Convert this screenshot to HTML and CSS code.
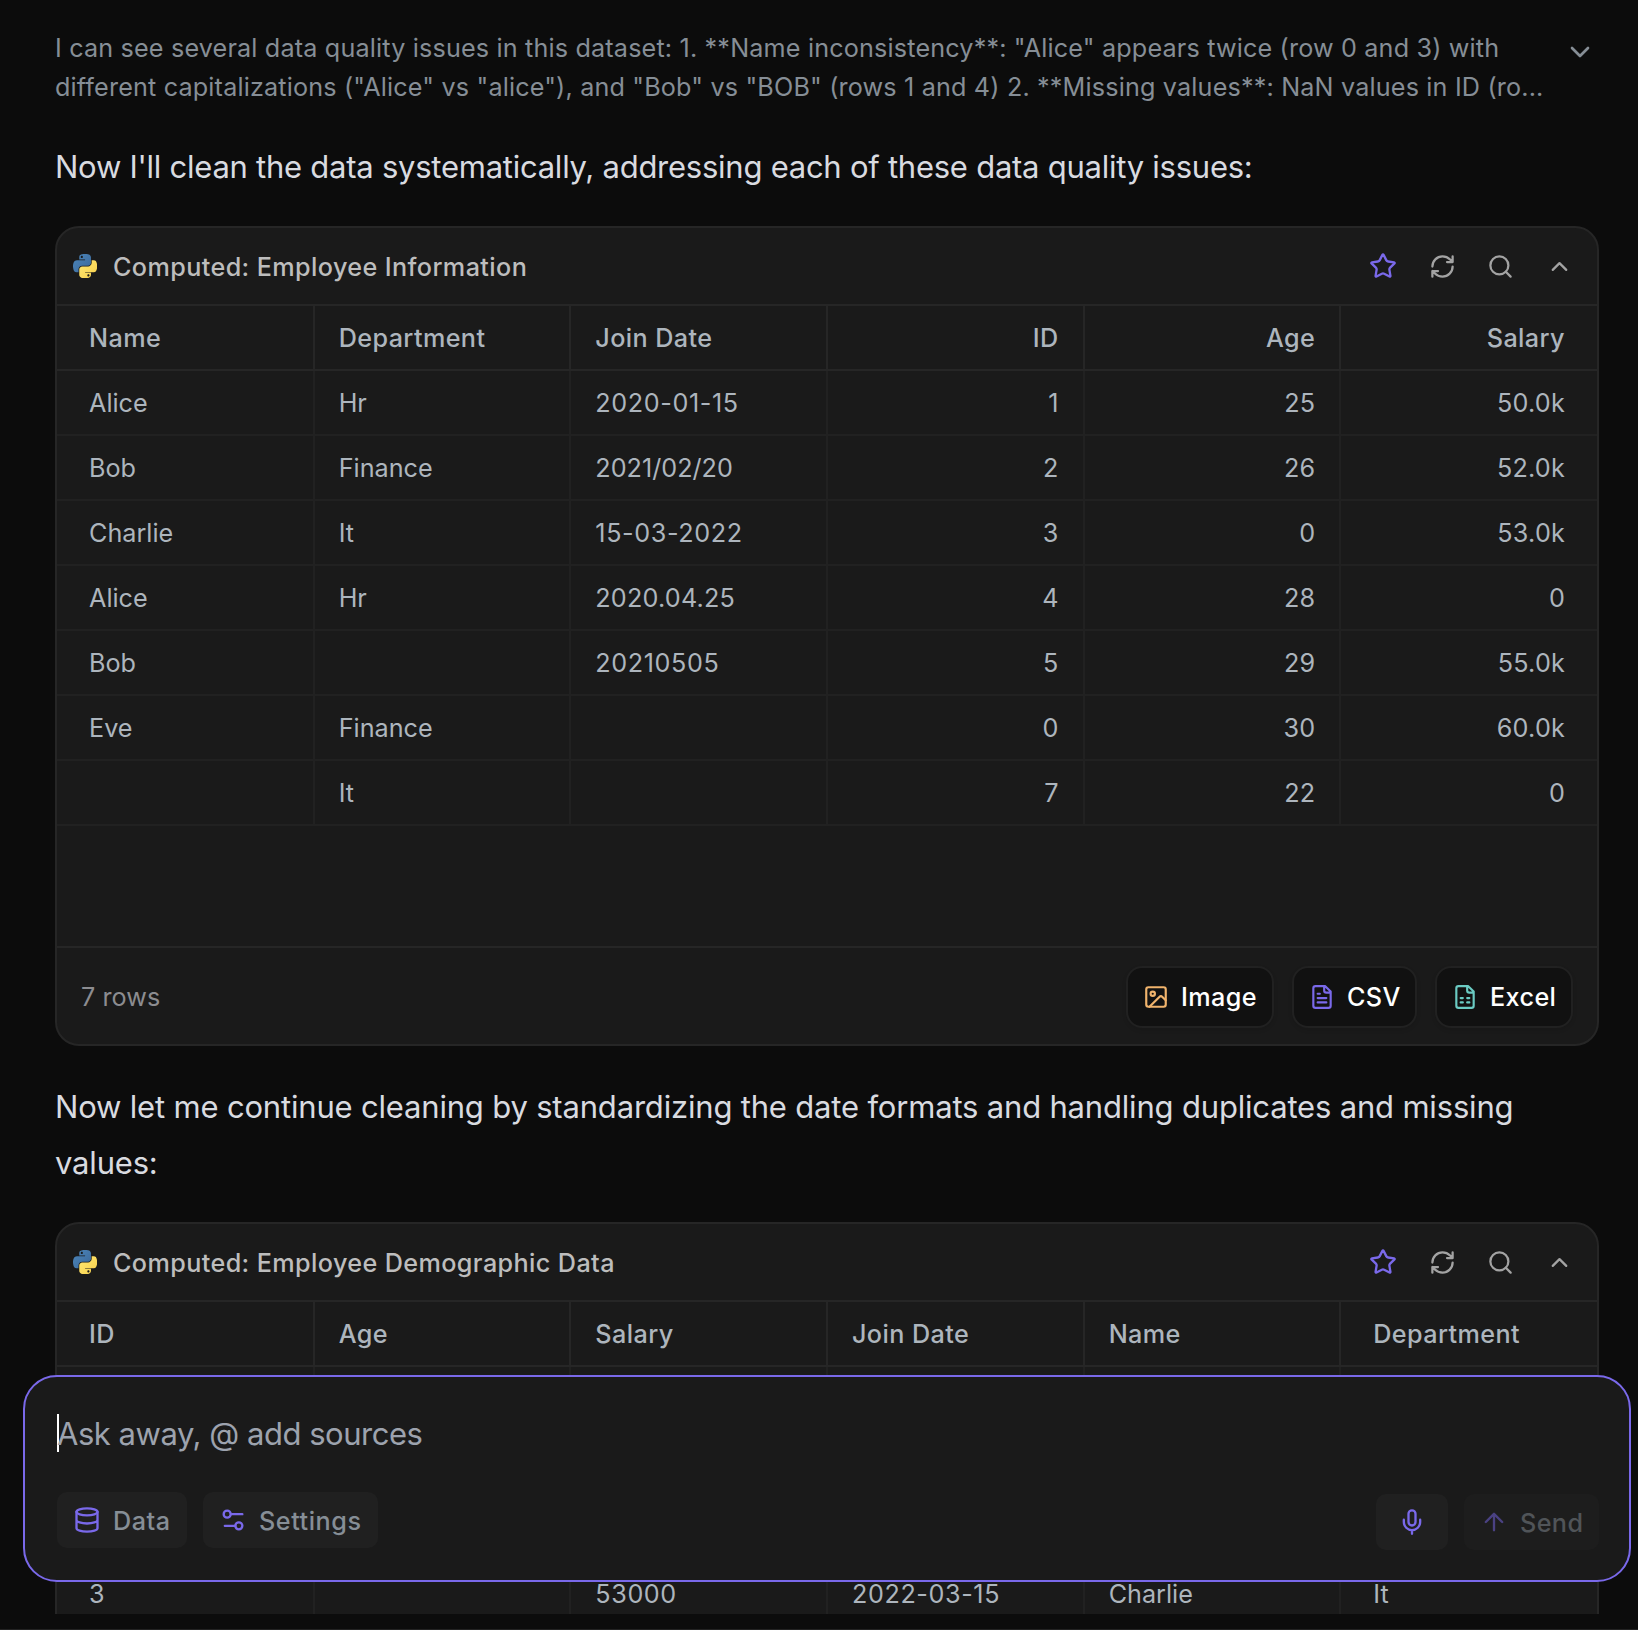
FILE: index.html
```html
<!DOCTYPE html>
<html lang="en">
<head>
<meta charset="utf-8">
<title>Data chat</title>
<link rel="stylesheet" href="styles.css">
</head>
<body>
<svg class="sprite" width="0" height="0" aria-hidden="true">
  <defs>
    <linearGradient id="py-blue" x1="0" y1="0" x2="1" y2="1"><stop offset="0" stop-color="#4b86bb"/><stop offset="1" stop-color="#3b6798"/></linearGradient>
    <linearGradient id="py-yellow" x1="0" y1="0" x2="1" y2="1"><stop offset="0" stop-color="#ffe873"/><stop offset="1" stop-color="#f8d04a"/></linearGradient>
    <symbol id="i-python" viewBox="0 0 110 110">
      <path fill="url(#py-blue)" d="M54.9 0c-4.600.02-9 .41-12.800 1.100-11.400 2-13.400 6.200-13.400 14v10.200h26.800v3.400H18.600c-7.800 0-14.600 4.700-16.800 13.600-2.500 10.200-2.600 16.600 0 27.300 1.900 7.900 6.500 13.600 14.300 13.600h9.200V70.900c0-8.900 7.700-16.700 16.800-16.700h26.800c7.500 0 13.400-6.100 13.400-13.600V15.100c0-7.300-6.100-12.700-13.400-14C64.300.3 59.500 0 54.900 0zM40.400 8.200c2.800 0 5 2.300 5 5.100s-2.200 5.100-5 5.100-5-2.300-5-5.100 2.200-5.100 5-5.100z"/>
      <path fill="url(#py-yellow)" d="M85.600 28.700v11.900c0 9.200-7.800 17-16.800 17H42.100c-7.300 0-13.400 6.300-13.400 13.600v25.500c0 7.300 6.300 11.500 13.400 13.600 8.500 2.500 16.600 2.900 26.800 0 6.700-2 13.400-5.900 13.400-13.600V86.500H55.500v-3.400h40.200c7.800 0 10.700-5.400 13.400-13.600 2.800-8.400 2.700-16.500 0-27.300-1.900-7.800-5.600-13.600-13.400-13.600zM70.600 93.300c2.800 0 5 2.300 5 5.100s-2.200 5.100-5 5.100-5-2.300-5-5.100 2.200-5.100 5-5.100z"/>
    </symbol>
    <symbol id="i-star" viewBox="0 0 24 24"><path d="M11.525 2.295a.53.53 0 0 1 .95 0l2.310 4.679a2.123 2.123 0 0 0 1.595 1.160l5.166.756a.53.53 0 0 1 .294.904l-3.736 3.638a2.123 2.123 0 0 0-.611 1.878l.882 5.140a.53.53 0 0 1-.771.560l-4.618-2.428a2.122 2.122 0 0 0-1.973 0L6.396 21.010a.53.53 0 0 1-.770-.560l.881-5.139a2.122 2.122 0 0 0-.611-1.879L2.160 9.795a.53.53 0 0 1 .294-.906l5.165-.755a2.122 2.122 0 0 0 1.597-1.160z"/></symbol>
    <symbol id="i-refresh" viewBox="0 0 24 24"><path d="M3 12a9 9 0 0 1 9-9 9.750 9.750 0 0 1 6.740 2.740L21 8M21 3v5h-5M21 12a9 9 0 0 1-9 9 9.750 9.750 0 0 1-6.740-2.740L3 16M8 16H3v5"/></symbol>
    <symbol id="i-search" viewBox="0 0 24 24"><circle cx="11" cy="11" r="8"/><path d="m21 21-4.300-4.300"/></symbol>
    <symbol id="i-up" viewBox="0 0 24 24"><path d="m18 15-6-6-6 6"/></symbol>
    <symbol id="i-down" viewBox="0 0 24 24"><path d="m6 9 6 6 6-6"/></symbol>
    <symbol id="i-image" viewBox="0 0 24 24"><rect x="3" y="3" width="18" height="18" rx="2"/><circle cx="9" cy="9" r="2"/><path d="m21 15-3.086-3.086a2 2 0 0 0-2.828 0L6 21"/></symbol>
    <symbol id="i-doc" viewBox="0 0 24 24"><path d="M15 2H6a2 2 0 0 0-2 2v16a2 2 0 0 0 2 2h12a2 2 0 0 0 2-2V7zM14 2v4a2 2 0 0 0 2 2h4M10 9H8M16 13H8M16 17H8"/></symbol>
    <symbol id="i-sheet" viewBox="0 0 24 24"><path d="M15 2H6a2 2 0 0 0-2 2v16a2 2 0 0 0 2 2h12a2 2 0 0 0 2-2V7zM14 2v4a2 2 0 0 0 2 2h4M8 13h2M14 13h2M8 17h2M14 17h2"/></symbol>
    <symbol id="i-data" viewBox="0 0 24 24"><ellipse cx="12" cy="5" rx="9" ry="3"/><path d="M3 5v14a9 3 0 0 0 18 0V5M3 12a9 3 0 0 0 18 0"/></symbol>
    <symbol id="i-settings" viewBox="0 0 24 24"><path d="M20 7h-9M14 17H5"/><circle cx="17" cy="17" r="3"/><circle cx="7" cy="7" r="3"/></symbol>
    <symbol id="i-mic" viewBox="0 0 24 24"><path d="M12 2a3 3 0 0 0-3 3v7a3 3 0 0 0 6 0V5a3 3 0 0 0-3-3zM19 10v2a7 7 0 0 1-14 0v-2M12 19v3"/></symbol>
    <symbol id="i-arrow" viewBox="0 0 24 24"><path d="m5 12 7-7 7 7M12 19V5"/></symbol>
  </defs>
</svg>
<div class="app">
  <main class="thread">
    <div class="thought">
      <p class="thought-text">I can see several data quality issues in this dataset: 1. **Name inconsistency**: "Alice" appears twice (row 0 and 3) with<br>different capitalizations ("Alice" vs "alice"), and "Bob" vs "BOB" (rows 1 and 4) 2. **Missing values**: NaN values in ID (ro...</p>
      <svg class="icon thought-toggle"><use href="#i-down"/></svg>
    </div>
    <p class="message">Now I'll clean the data systematically, addressing each of these data quality issues:</p>
    <section class="card">
      <header class="card-head">
        <svg class="python"><use href="#i-python"/></svg>
        <h2 class="card-title">Computed: Employee Information</h2>
        <div class="actions">
          <svg class="icon star"><use href="#i-star"/></svg>
          <svg class="icon"><use href="#i-refresh"/></svg>
          <svg class="icon"><use href="#i-search"/></svg>
          <svg class="icon"><use href="#i-up"/></svg>
        </div>
      </header>
      <div class="table-area">
        <table class="grid">
          <thead><tr><th>Name</th><th>Department</th><th>Join Date</th><th class="num">ID</th><th class="num">Age</th><th class="num">Salary</th></tr></thead>
          <tbody>
            <tr><td>Alice</td><td>Hr</td><td class="date">2020-01-15</td><td class="num">1</td><td class="num">25</td><td class="num">50.0k</td></tr>
            <tr><td>Bob</td><td>Finance</td><td>2021/02/20</td><td class="num">2</td><td class="num">26</td><td class="num">52.0k</td></tr>
            <tr><td>Charlie</td><td>It</td><td class="date">15-03-2022</td><td class="num">3</td><td class="num">0</td><td class="num">53.0k</td></tr>
            <tr><td>Alice</td><td>Hr</td><td class="dotted">2020.04.25</td><td class="num">4</td><td class="num">28</td><td class="num">0</td></tr>
            <tr><td>Bob</td><td></td><td class="date">20210505</td><td class="num">5</td><td class="num">29</td><td class="num">55.0k</td></tr>
            <tr><td>Eve</td><td>Finance</td><td></td><td class="num">0</td><td class="num">30</td><td class="num">60.0k</td></tr>
            <tr><td></td><td>It</td><td></td><td class="num">7</td><td class="num">22</td><td class="num">0</td></tr>
          </tbody>
        </table>
      </div>
      <footer class="card-foot">
        <span class="count">7 rows</span>
        <button class="export image"><svg class="icon"><use href="#i-image"/></svg><span>Image</span></button>
        <button class="export csv"><svg class="icon"><use href="#i-doc"/></svg><span>CSV</span></button>
        <button class="export excel"><svg class="icon"><use href="#i-sheet"/></svg><span>Excel</span></button>
      </footer>
    </section>
    <p class="message wide">Now let me continue cleaning by standardizing the date formats and handling duplicates and missing values:</p>
    <section class="card">
      <header class="card-head">
        <svg class="python"><use href="#i-python"/></svg>
        <h2 class="card-title">Computed: Employee Demographic Data</h2>
        <div class="actions">
          <svg class="icon star"><use href="#i-star"/></svg>
          <svg class="icon"><use href="#i-refresh"/></svg>
          <svg class="icon"><use href="#i-search"/></svg>
          <svg class="icon"><use href="#i-up"/></svg>
        </div>
      </header>
      <div class="table-area">
        <table class="grid">
          <thead><tr><th>ID</th><th>Age</th><th>Salary</th><th>Join Date</th><th>Name</th><th>Department</th></tr></thead>
          <tbody>
            <tr><td></td><td></td><td></td><td></td><td></td><td></td></tr>
            <tr><td></td><td></td><td></td><td></td><td></td><td></td></tr>
            <tr><td></td><td></td><td></td><td></td><td></td><td></td></tr>
            <tr><td>3</td><td></td><td class="date">53000</td><td class="date">2022-03-15</td><td>Charlie</td><td>It</td></tr>
          </tbody>
        </table>
      </div>
    </section>
  </main>
  <div class="composer">
    <div class="prompt"><span class="caret"></span>Ask away, @ add sources</div>
    <div class="tools">
      <button class="tool data"><svg class="icon"><use href="#i-data"/></svg><span>Data</span></button>
      <button class="tool settings"><svg class="icon"><use href="#i-settings"/></svg><span>Settings</span></button>
      <div class="send-group">
        <button class="tool mic"><svg class="icon"><use href="#i-mic"/></svg></button>
        <button class="tool send"><svg class="icon"><use href="#i-arrow"/></svg><span>Send</span></button>
      </div>
    </div>
  </div>
</div>
</body>
</html>
```
FILE: styles.css
```css
* { box-sizing: border-box; }
body {
  margin: 0;
  background: #0c0c0c;
  font-family: Inter, "Liberation Sans", sans-serif;
  font-size: 25.2px;
  letter-spacing: 0.16px;
}
.sprite { position: absolute; }
.app {
  position: relative;
  width: 1638px;
  height: 1630px;
  overflow: hidden;
  border-bottom: 1px solid #232323;
}
.thread {
  height: 1614px;
  overflow: hidden;
  padding: 29px 39px 0 55px;
}
.thought { display: flex; height: 78px; }
.thought-text {
  flex: 1;
  min-width: 0;
  margin: 0;
  line-height: 39px;
  color: #868e96;
  white-space: nowrap;
}
.icon {
  flex: none;
  width: 28px;
  height: 28px;
  fill: none;
  stroke: currentColor;
  stroke-width: 2;
  stroke-linecap: round;
  stroke-linejoin: round;
}
.thought-toggle { width: 32px; height: 32px; margin: 7px 3px 0 0; color: #868e96; }
.message {
  margin: 32px 0 31px;
  font-size: 31px;
  line-height: 56px;
  letter-spacing: -0.25px;
  color: #d9dbe0;
}
.wide { margin-top: 33px; letter-spacing: -0.18px; }
.card {
  height: 820px;
  display: flex;
  flex-direction: column;
  overflow: hidden;
  border: 2px solid #262626;
  border-radius: 24px;
  background: #1a1a1a;
}
.card-head {
  flex: none;
  display: flex;
  align-items: center;
  height: 78px;
  padding: 0 24px 0 16px;
  border-bottom: 2px solid #262626;
}
.python { width: 24px; height: 24px; }
.card-title {
  margin: 0 0 0 16px;
  padding-top: 2px;
  font-size: 25.2px;
  font-weight: 500;
  letter-spacing: 0.39px;
  color: #bdbdbd;
}
.actions { display: flex; align-items: center; gap: 31.7px; margin-left: auto; color: #a3a3a3; }
.actions .icon { width: 27px; height: 27px; }
.actions .star { width: 28px; height: 28px; margin: 0 0.3px 0 0; }
.star { color: #7a69ea; }
.table-area { flex: 1; min-height: 0; }
.grid {
  width: 100%;
  table-layout: fixed;
  border-collapse: collapse;
  color: #adb5bd;
  letter-spacing: 0;
}
.grid th, .grid td {
  height: 65px;
  padding: 0 24px;
  text-align: left;
  font-weight: 400;
  border-right: 2px solid #212121;
  border-bottom: 2px solid #212121;
}
.grid th { height: 64px; font-weight: 500; border-color: #262626; letter-spacing: 0.4px; }
.grid .num { text-align: right; }
.grid td.num { letter-spacing: 0.2px; }
.grid .date { letter-spacing: 0.6px; }
.grid .dotted { letter-spacing: 0.2px; }
.grid th:first-child, .grid td:first-child { padding-left: 32px; }
.grid th:last-child, .grid td:last-child { padding-right: 32px; border-right: 0; }
.grid th:last-child:not(.num), .grid td:last-child:not(.num) { padding-left: 32px; }
.card-foot {
  flex: none;
  display: flex;
  align-items: center;
  gap: 18px;
  height: 98px;
  padding: 1px 24px 0;
  border-top: 2px solid #262626;
}
.count { flex: 1; padding-top: 1px; color: #8c8c90; letter-spacing: 0.05px; }
button { font: inherit; }
.export {
  display: flex;
  align-items: center;
  gap: 12px;
  height: 62px;
  padding: 0 0 0 15px;
  border: 2px solid #212121;
  border-radius: 16px;
  background: #111;
  color: #fff;
  font-weight: 500;
  letter-spacing: 0.4px;
  box-shadow: 0 2px 4px rgba(0, 0, 0, 0.1);
}
.export span { padding-top: 1px; }
.export .icon { width: 26px; height: 26px; }
.image { width: 148px; }
.csv { width: 125px; }
.excel { width: 138px; }
.image .icon { color: #f0b36c; }
.csv .icon { color: #7a69ea; }
.excel .icon { color: #6bcbc3; }
.composer {
  position: absolute;
  left: 23px;
  top: 1375px;
  width: 1608px;
  height: 207px;
  padding: 31px 30px 30px 32px;
  border: 2px solid #7a69ea;
  border-radius: 34px;
  background: #1a1a1a;
}
.prompt {
  display: flex;
  align-items: center;
  height: 50px;
  font-size: 31px;
  letter-spacing: -0.47px;
  color: #9da3ae;
}
.caret { width: 2px; height: 38px; margin-right: -2px; background: #fff; }
.tools { display: flex; gap: 16px; margin-top: 34px; }
.tool {
  display: flex;
  align-items: center;
  gap: 12px;
  height: 56px;
  padding: 0 0 0 16px;
  border: 0;
  border-radius: 10px;
  background: #202020;
  color: #868e96;
  font-weight: 500;
  letter-spacing: 0.55px;
}
.tool span { padding-top: 2px; }
.tool .icon { color: #7a69ea; }
.data { width: 130px; }
.settings { width: 175px; }
.send-group { display: flex; gap: 16px; margin: 2px 0 0 auto; }
.mic { width: 72px; padding: 0; justify-content: center; }
.send { width: 135px; letter-spacing: 0.4px; opacity: 0.5; }
```
